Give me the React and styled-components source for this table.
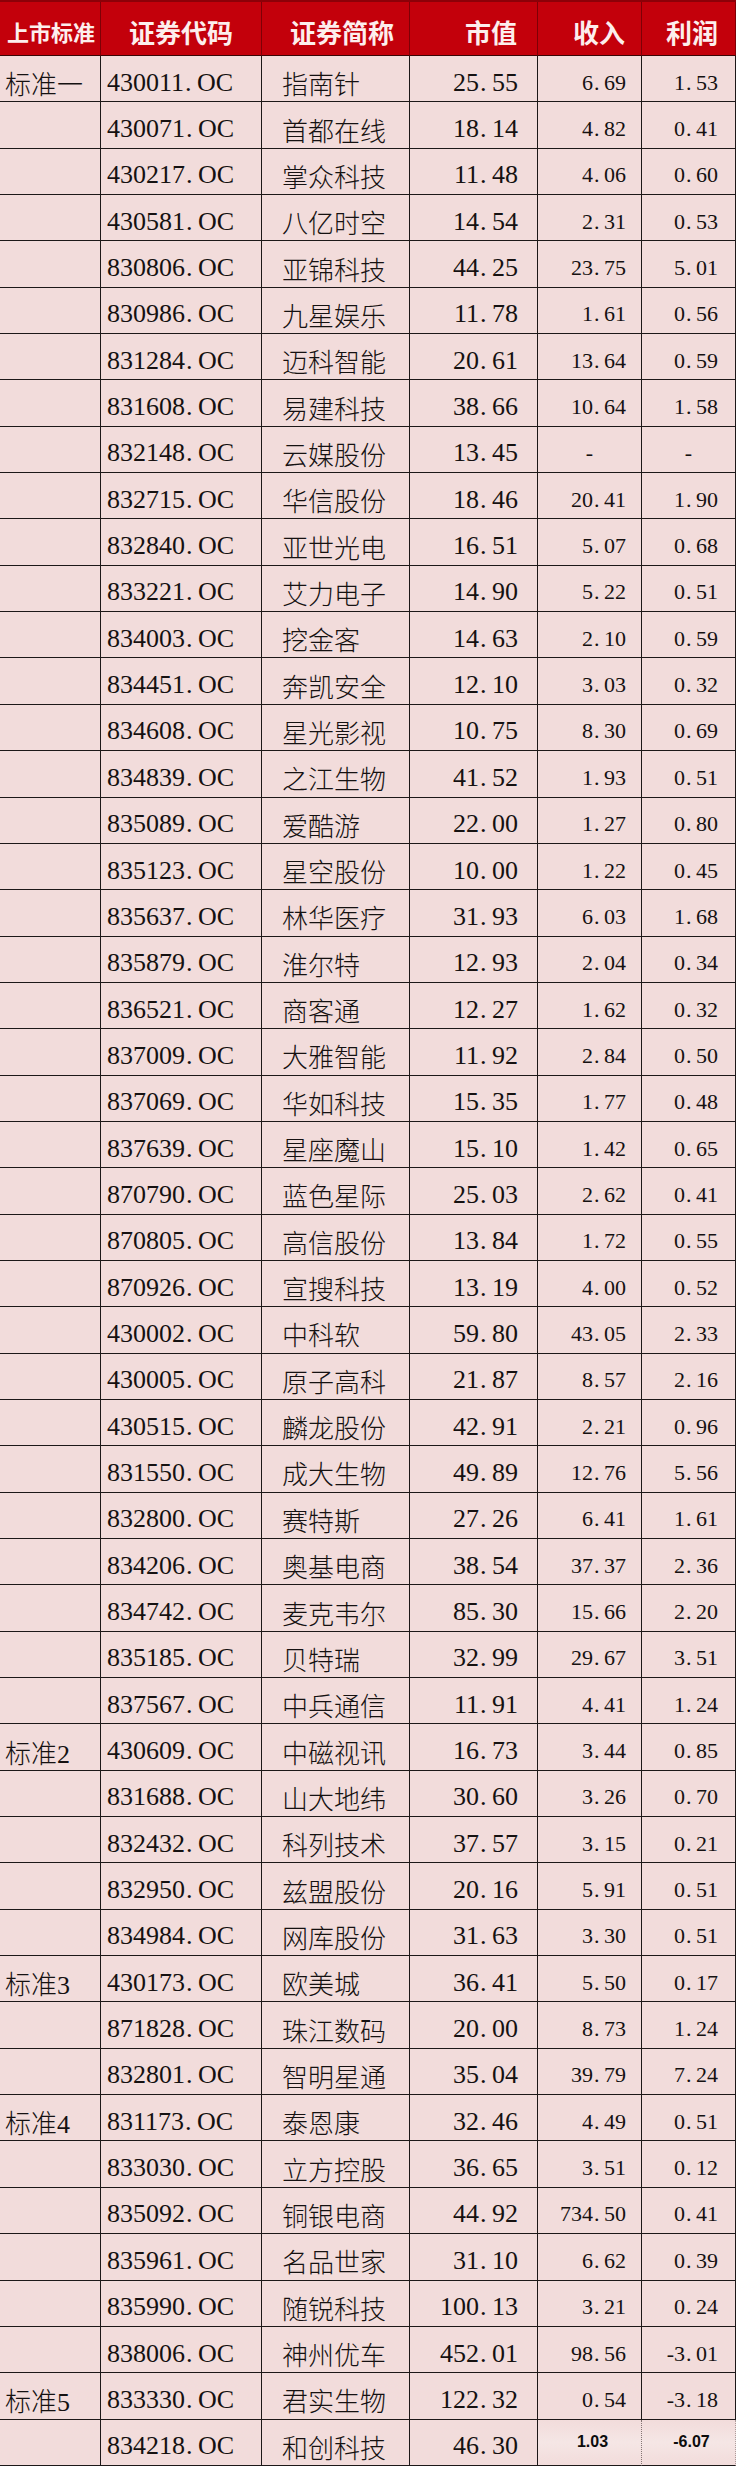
import styled, { createGlobalStyle } from "styled-components";

const GlobalStyle = createGlobalStyle`
  body {
    margin: 0;
    background: #ffffff;
  }
`;

const COLS = "101px 161px 148px 128px 104px 94px";

// per-column alignment, side padding and type size
const COLUMN = [
  { align: "flex-start", pl: 5, pr: 0, size: 26 },
  { align: "flex-start", pl: 6, pr: 0, size: 26 },
  { align: "flex-start", pl: 20, pr: 0, size: 26 },
  { align: "flex-end", pl: 0, pr: 19, size: 26 },
  { align: "flex-end", pl: 0, pr: 15, size: 22 },
  { align: "flex-end", pl: 0, pr: 17, size: 22 },
];

const HEAD = [
  { label: "上市标准", align: "flex-start", pl: 7, pr: 0, size: 22 },
  { label: "证券代码", align: "center", pl: 0, pr: 0, size: 26 },
  { label: "证券简称", align: "flex-start", pl: 28, pr: 0, size: 26 },
  { label: "市值", align: "flex-end", pl: 0, pr: 20, size: 26 },
  { label: "收入", align: "flex-end", pl: 0, pr: 16, size: 26 },
  { label: "利润", align: "flex-end", pl: 0, pr: 17, size: 26 },
];

const ROWS = [
  ["标准一", "430011.OC", "指南针", "25.55", "6.69", "1.53"],
  ["", "430071.OC", "首都在线", "18.14", "4.82", "0.41"],
  ["", "430217.OC", "掌众科技", "11.48", "4.06", "0.60"],
  ["", "430581.OC", "八亿时空", "14.54", "2.31", "0.53"],
  ["", "830806.OC", "亚锦科技", "44.25", "23.75", "5.01"],
  ["", "830986.OC", "九星娱乐", "11.78", "1.61", "0.56"],
  ["", "831284.OC", "迈科智能", "20.61", "13.64", "0.59"],
  ["", "831608.OC", "易建科技", "38.66", "10.64", "1.58"],
  ["", "832148.OC", "云媒股份", "13.45", "-", "-"],
  ["", "832715.OC", "华信股份", "18.46", "20.41", "1.90"],
  ["", "832840.OC", "亚世光电", "16.51", "5.07", "0.68"],
  ["", "833221.OC", "艾力电子", "14.90", "5.22", "0.51"],
  ["", "834003.OC", "挖金客", "14.63", "2.10", "0.59"],
  ["", "834451.OC", "奔凯安全", "12.10", "3.03", "0.32"],
  ["", "834608.OC", "星光影视", "10.75", "8.30", "0.69"],
  ["", "834839.OC", "之江生物", "41.52", "1.93", "0.51"],
  ["", "835089.OC", "爱酷游", "22.00", "1.27", "0.80"],
  ["", "835123.OC", "星空股份", "10.00", "1.22", "0.45"],
  ["", "835637.OC", "林华医疗", "31.93", "6.03", "1.68"],
  ["", "835879.OC", "淮尔特", "12.93", "2.04", "0.34"],
  ["", "836521.OC", "商客通", "12.27", "1.62", "0.32"],
  ["", "837009.OC", "大雅智能", "11.92", "2.84", "0.50"],
  ["", "837069.OC", "华如科技", "15.35", "1.77", "0.48"],
  ["", "837639.OC", "星座魔山", "15.10", "1.42", "0.65"],
  ["", "870790.OC", "蓝色星际", "25.03", "2.62", "0.41"],
  ["", "870805.OC", "高信股份", "13.84", "1.72", "0.55"],
  ["", "870926.OC", "宣搜科技", "13.19", "4.00", "0.52"],
  ["", "430002.OC", "中科软", "59.80", "43.05", "2.33"],
  ["", "430005.OC", "原子高科", "21.87", "8.57", "2.16"],
  ["", "430515.OC", "麟龙股份", "42.91", "2.21", "0.96"],
  ["", "831550.OC", "成大生物", "49.89", "12.76", "5.56"],
  ["", "832800.OC", "赛特斯", "27.26", "6.41", "1.61"],
  ["", "834206.OC", "奥基电商", "38.54", "37.37", "2.36"],
  ["", "834742.OC", "麦克韦尔", "85.30", "15.66", "2.20"],
  ["", "835185.OC", "贝特瑞", "32.99", "29.67", "3.51"],
  ["", "837567.OC", "中兵通信", "11.91", "4.41", "1.24"],
  ["标准2", "430609.OC", "中磁视讯", "16.73", "3.44", "0.85"],
  ["", "831688.OC", "山大地纬", "30.60", "3.26", "0.70"],
  ["", "832432.OC", "科列技术", "37.57", "3.15", "0.21"],
  ["", "832950.OC", "兹盟股份", "20.16", "5.91", "0.51"],
  ["", "834984.OC", "网库股份", "31.63", "3.30", "0.51"],
  ["标准3", "430173.OC", "欧美城", "36.41", "5.50", "0.17"],
  ["", "871828.OC", "珠江数码", "20.00", "8.73", "1.24"],
  ["", "832801.OC", "智明星通", "35.04", "39.79", "7.24"],
  ["标准4", "831173.OC", "泰恩康", "32.46", "4.49", "0.51"],
  ["", "833030.OC", "立方控股", "36.65", "3.51", "0.12"],
  ["", "835092.OC", "铜银电商", "44.92", "734.50", "0.41"],
  ["", "835961.OC", "名品世家", "31.10", "6.62", "0.39"],
  ["", "835990.OC", "随锐科技", "100.13", "3.21", "0.24"],
  ["", "838006.OC", "神州优车", "452.01", "98.56", "-3.01"],
  ["标准5", "833330.OC", "君实生物", "122.32", "0.54", "-3.18"],
  ["", "834218.OC", "和创科技", "46.30", "1.03", "-6.07"],
];

const Sheet = styled.div`
  width: 736px;
  font-family: "Liberation Serif", "Noto Sans CJK SC", serif;
  font-weight: 300;
  color: #151111;
`;

const HeadRow = styled.div`
  display: grid;
  grid-template-columns: ${COLS};
  height: 56px;
  box-sizing: border-box;
  border-top: 2px solid #8c0008;
  background: #c3000b;
`;

const HeadCell = styled.div`
  display: flex;
  align-items: center;
  justify-content: ${(p) => p.$align};
  box-sizing: border-box;
  padding: 5px ${(p) => p.$pr}px 0 ${(p) => p.$pl}px;
  border-right: 1px solid #7e0006;
  border-bottom: 1px solid #3a0505;
  font-family: "Noto Sans CJK SC", sans-serif;
  font-size: ${(p) => p.$size}px;
  font-weight: 700;
  color: #fdeeed;
  white-space: nowrap;
`;

const BodyRow = styled.div`
  display: grid;
  grid-template-columns: ${COLS};
  height: 46.35px;
  background: #f2dcdb;
`;

const Cell = styled.div`
  display: flex;
  align-items: center;
  justify-content: ${(p) => p.$align};
  box-sizing: border-box;
  padding: 8px ${(p) => p.$pr}px 0 ${(p) => p.$pl}px;
  border-right: 1px solid #1d1818;
  border-bottom: 1px solid #1d1818;
  font-size: ${(p) => p.$size}px;
  white-space: nowrap;
  overflow: hidden;
`;

// the last two figures were pasted in as a picture in another font
const PatchCell = styled(Cell)`
  justify-content: center;
  padding: 0 0 0 ${(p) => p.$shift}px;
  font-family: "Liberation Sans", sans-serif;
  font-size: 16px;
  font-weight: 700;
  color: #0c0c0c;
  border-right: 1px dotted rgba(40, 30, 30, ${(p) => p.$edge});
  background: linear-gradient(180deg, #f2dcdb 0%, #f5e6e5 50%, #f2dcdb 100%);
`;

const Dot = styled.span`
  display: inline-block;
  width: 0.5em;
  padding-left: 0.04em;
  box-sizing: border-box;
  text-align: left;
`;

const Figure = ({ value }) => {
  if (!value.includes(".")) return value;
  const [whole, frac] = value.split(".");
  return (
    <>
      {whole}
      <Dot>.</Dot>
      {frac}
    </>
  );
};

const App = () => {
  const last = ROWS.length - 1;
  return (
    <>
      <GlobalStyle />
      <Sheet>
        <HeadRow>
          {HEAD.map((h) => (
            <HeadCell
              key={h.label}
              $align={h.align}
              $pl={h.pl}
              $pr={h.pr}
              $size={h.size}>
              {h.label}
            </HeadCell>
          ))}
        </HeadRow>
        {ROWS.map((row, r) => (
          <BodyRow key={row[1]}>
            {row.map((value, c) => {
              const col = COLUMN[c];
              if (r === last && c >= 4) {
                return (
                  <PatchCell
                    key={c}
                    $align="center"
                    $pl={0}
                    $pr={0}
                    $size={16}
                    $shift={6}
                    $edge={c === 4 ? 0.55 : 0.35}>
                    {value}
                  </PatchCell>
                );
              }
              const dash = value === "-";
              return (
                <Cell
                  key={c}
                  $align={dash ? "center" : col.align}
                  $pl={dash ? 0 : col.pl}
                  $pr={dash ? 0 : col.pr}
                  $size={col.size}>
                  <Figure value={value} />
                </Cell>
              );
            })}
          </BodyRow>
        ))}
      </Sheet>
    </>
  );
};

export default App;
